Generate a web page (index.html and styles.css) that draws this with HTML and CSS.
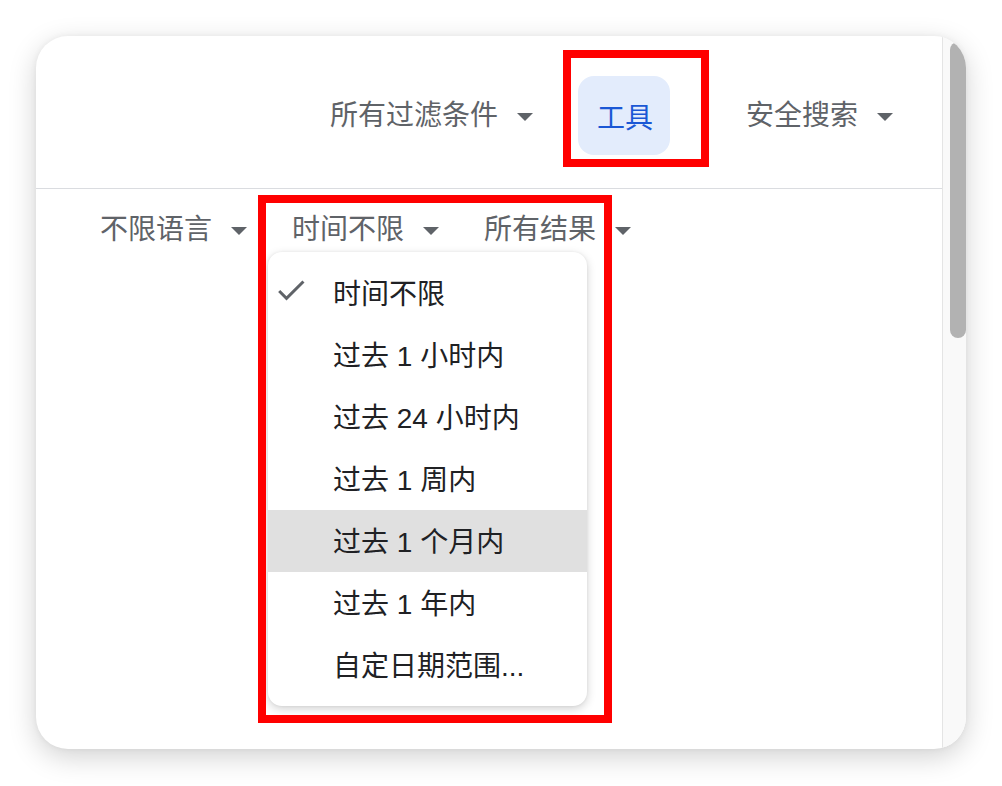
FILE: index.html
```html
<!DOCTYPE html>
<html lang="zh-CN">
<head>
<meta charset="utf-8">
<title>工具</title>
<link rel="stylesheet" href="styles.css">
</head>
<body>
<div class="card">
  <div class="main">
    <div class="topbar">
      <div class="tab">所有过滤条件<span class="caret"></span></div>
      <div class="chip">工具</div>
      <div class="tab tab-safe">安全搜索<span class="caret"></span></div>
    </div>
    <div class="filters">
      <div class="filter">不限语言<span class="caret"></span></div>
      <div class="filter">时间不限<span class="caret"></span></div>
      <div class="filter">所有结果<span class="caret"></span></div>
    </div>
  </div>
  <div class="scrollbar"><div class="thumb"></div></div>

  <div class="menu">
    <div class="item">
      <svg class="check" viewBox="0 0 24 24"><path d="M9 16.17L4.83 12l-1.42 1.41L9 19 21 7l-1.41-1.41z"/></svg>
      时间不限
    </div>
    <div class="item">过去 1 小时内</div>
    <div class="item">过去 24 小时内</div>
    <div class="item">过去 1 周内</div>
    <div class="item item-hover">过去 1 个月内</div>
    <div class="item">过去 1 年内</div>
    <div class="item">自定日期范围...</div>
  </div>

  <div class="mark mark-tools"></div>
  <div class="mark mark-menu"></div>
</div>
</body>
</html>
```

FILE: styles.css
```css
* { box-sizing: border-box; }
html, body { margin: 0; padding: 0; background: #ffffff; }
body {
  width: 1002px;
  height: 786px;
  overflow: hidden;
  font-family: "Liberation Sans", "Noto Sans CJK SC", sans-serif;
}
.card {
  position: relative;
  margin: 36px 0 0 36px;
  width: 930px;
  height: 713px;
  border-radius: 32px;
  overflow: hidden;
  background: #ffffff;
  box-shadow: 0 8px 28px rgba(0, 0, 0, 0.18), 0 0 6px rgba(0, 0, 0, 0.05);
  display: flex;
}
.main { flex: 1; }
.topbar {
  height: 153px;
  border-bottom: 1px solid #dadce0;
  display: flex;
  align-items: center;
  padding: 7px 0 0 294px;
}
.tab, .filter {
  display: flex;
  align-items: center;
  font-size: 28px;
  line-height: 34px;
  color: #5f6368;
}
.caret {
  display: inline-block;
  width: 0;
  height: 0;
  border-left: 8px solid transparent;
  border-right: 8px solid transparent;
  border-top: 8px solid #5f6368;
  margin-left: 19px;
  margin-top: 2px;
}
.chip {
  margin-left: 45px;
  height: 79px;
  padding: 0 17px 0 19px;
  display: flex;
  align-items: center;
  border-radius: 16px;
  background: #e3ecfc;
  color: #1a57d5;
  font-size: 28px;
}
.tab-safe { margin-left: 76px; }
.filters {
  display: flex;
  padding: 24px 0 0 64px;
}
.filter + .filter { margin-left: 45px; }
.scrollbar {
  width: 24px;
  border-left: 1px solid #e4e4e4;
  background: #f9f9f9;
  padding: 6px 0 0 7px;
}
.thumb {
  width: 16px;
  height: 296px;
  border-radius: 8px;
  background: #b2b2b2;
}
.menu {
  position: absolute;
  left: 232px;
  top: 216px;
  width: 319px;
  padding: 10px 0;
  background: #ffffff;
  border-radius: 14px;
  box-shadow: 0 3px 10px rgba(0, 0, 0, 0.18), 0 0 3px rgba(0, 0, 0, 0.06);
}
.item {
  position: relative;
  height: 62px;
  display: flex;
  align-items: center;
  padding: 0 0 3px 65px;
  font-size: 28px;
  color: #202124;
}
.item-hover { background: #e0e0e0; }
.check {
  position: absolute;
  left: 5px;
  top: 10px;
  width: 36px;
  height: 36px;
  fill: #5f6368;
}
.mark {
  position: absolute;
  border: 8px solid #ff0000;
}
.mark-tools {
  left: 527px;
  top: 14px;
  width: 146px;
  height: 117px;
}
.mark-menu {
  left: 222px;
  top: 159px;
  width: 354px;
  height: 528px;
}
```
